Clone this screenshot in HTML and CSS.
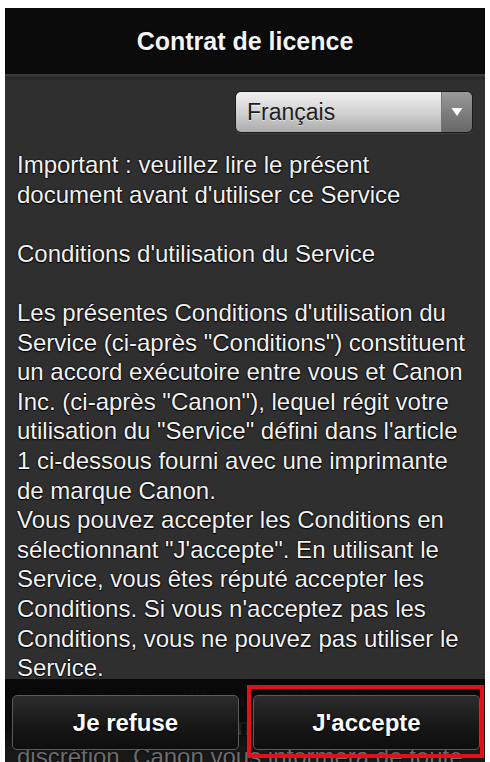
FILE: index.html
```html
<!DOCTYPE html>
<html lang="fr">
<head>
<meta charset="utf-8">
<title>Contrat de licence</title>
<link rel="stylesheet" href="styles.css">
</head>
<body>
<div class="screen">
  <header class="titlebar">Contrat de licence</header>
  <main class="content">
    <div class="lang-row">
      <div class="select">
        <span class="select-label">Français</span>
        <span class="select-arrow"><svg width="12" height="10" viewBox="0 0 12 10"><path d="M0.5 1 L11.5 1 L6 9 Z" fill="#ffffff"/></svg></span>
      </div>
    </div>
    <div class="terms">
      <p>Important : veuillez lire le présent document avant d'utiliser ce Service</p>
      <p>Conditions d'utilisation du Service</p>
      <p>Les présentes Conditions d'utilisation du Service (ci-après "Conditions") constituent un accord exécutoire entre vous et Canon Inc. (ci-après "Canon"), lequel régit votre utilisation du "Service" défini dans l'article 1 ci-dessous fourni avec une imprimante de marque Canon.<br>Vous pouvez accepter les Conditions en sélectionnant "J'accepte". En utilisant le Service, vous êtes réputé accepter les Conditions. Si vous n'acceptez pas les Conditions, vous ne pouvez pas utiliser le Service.<br>Canon peut modifier les présentes Conditions à tout moment, à sa seule discrétion. Canon vous informera de toute modification des Conditions.</p>
    </div>
  </main>
  <footer class="actions">
    <button class="btn btn-refuse" type="button">Je refuse</button>
    <div class="highlight">
      <button class="btn btn-accept" type="button">J'accepte</button>
    </div>
  </footer>
</div>
</body>
</html>
```

FILE: styles.css
```css
html, body {
  margin: 0;
  padding: 0;
  background: #ffffff;
  height: 100%;
  overflow: hidden;
}

.screen {
  position: relative;
  margin: 8px 0 0 5px;
  width: 480px;
  height: 754px;
  overflow: hidden;
  background: #2f2f2f;
  font-family: "Liberation Sans", Arial, Helvetica, sans-serif;
  color: #f2f2f2;
  display: flex;
  flex-direction: column;
}

.titlebar {
  flex: 0 0 auto;
  height: 66px;
  background: #0b0b0b;
  display: flex;
  align-items: center;
  justify-content: center;
  font-size: 25px;
  font-weight: bold;
  color: #f4f4f4;
  text-shadow: 0 0 2px #000, 0 1px 1px #000;
  padding-top: 1px;
  box-sizing: border-box;
}

.content {
  flex: 1 1 auto;
  background: linear-gradient(#3a3a3a 0, #3a3a3a 2px, #262626 3px, #2f2f2f 6px, #2f2f2f 100%);
  padding: 17px 12px 0 12px;
}

.lang-row {
  display: flex;
  justify-content: flex-end;
}

.select {
  width: 238px;
  height: 42px;
  box-sizing: border-box;
  border: 1px solid #1a1a1a;
  border-radius: 6px;
  display: flex;
  overflow: hidden;
  box-shadow: 0 1px 1px rgba(255,255,255,0.08);
}

.select-label {
  flex: 1 1 auto;
  background: linear-gradient(#f0f0f0, #cfcfcf 55%, #ababab);
  color: #1e1e1e;
  font-size: 23px;
  line-height: 40px;
  padding-left: 11px;
  text-shadow: 0 1px 0 rgba(255,255,255,0.5);
}

.select-arrow {
  flex: 0 0 30px;
  background: linear-gradient(#9a9a9a, #7c7c7c 55%, #686868);
  border-left: 1px solid #777;
  display: flex;
  align-items: center;
  justify-content: center;
}

.terms {
  padding: 17px 3px 0 0;
  font-size: 24px;
  line-height: 29.6px;
  text-shadow: 0 0 2px #000, 0 1px 1px #000, 0 0 1px #000;
}

.terms p {
  margin: 0 0 29.6px 0;
}

.actions {
  position: absolute;
  left: 0;
  right: 0;
  bottom: 0;
  height: 83px;
  box-sizing: border-box;
  background: linear-gradient(rgba(8,8,8,1), rgba(8,8,8,0.98) 20%, rgba(8,8,8,0.9) 60%, rgba(8,8,8,0.6) 85%, rgba(8,8,8,0.55));
  display: flex;
  align-items: flex-start;
  padding: 6px 0 0 7px;
  gap: 8px;
}

.btn {
  width: 227px;
  height: 55px;
  border: 1.5px solid #5b5b5b;
  border-radius: 5px;
  background: linear-gradient(#2c2c2c, #161616 60%, #0e0e0e);
  color: #ffffff;
  font-family: "Liberation Sans", Arial, Helvetica, sans-serif;
  font-size: 24px;
  font-weight: bold;
  text-shadow: 0 0 2px #000, 0 1px 1px #000;
  padding: 0;
  box-sizing: border-box;
}

.btn-refuse {
  margin-top: 10px;
}

.highlight {
  border: 4px solid #e0111b;
  padding: 6px 0 4px 2px;
  width: 237px;
  box-sizing: border-box;
}
```
